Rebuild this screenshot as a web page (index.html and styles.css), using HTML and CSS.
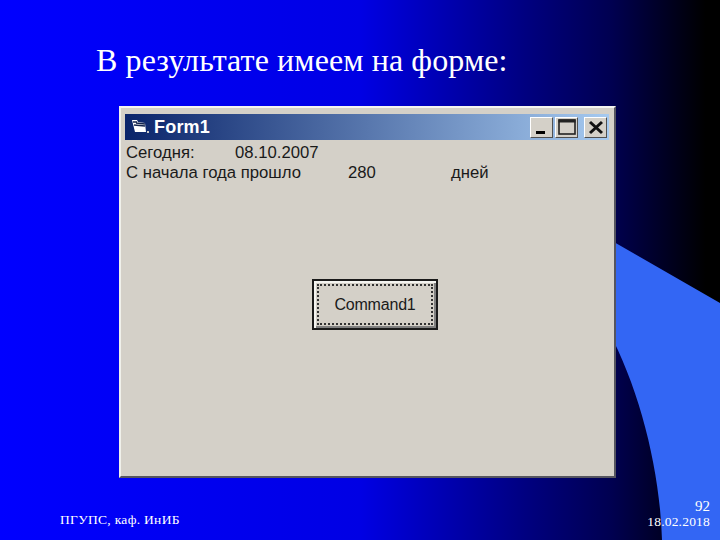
FILE: index.html
```html
<!DOCTYPE html>
<html lang="ru">
<head>
<meta charset="utf-8">
<title>Слайд 92</title>
<link rel="stylesheet" href="styles.css">
</head>
<body>
<div class="slide">
  <svg class="deco" width="720" height="540" viewBox="0 0 720 540" aria-hidden="true">
    <path d="M600 234 L720 303 V540 H662 C660 470 640 390 608 330 Z" fill="#3366f4"/>
  </svg>
  <h1 class="title">В результате имеем на форме:</h1>
  <div class="window">
    <div class="titlebar">
      <svg class="app-icon" width="18" height="16" viewBox="0 0 18 16" aria-hidden="true">
        <path d="M1 1 L6 1 L7 3 L14 4 L15 13 L4 13 Z" fill="#fff"/>
        <path d="M3 6 L14 7 M2 3 L6 3 M5 4 L14 5" stroke="#14244e" stroke-width="1.4" fill="none"/>
        <rect x="16" y="12" width="2" height="2" fill="#c8c8c8"/>
      </svg>
      <span class="caption">Form1</span>
      <div class="controls">
        <span class="ctl"><svg width="23" height="21" viewBox="0 0 23 21"><rect x="6" y="14" width="9" height="3" fill="#000"/></svg></span>
        <span class="ctl"><svg width="23" height="21" viewBox="0 0 23 21"><rect x="4" y="3" width="16" height="14" fill="none" stroke="#222" stroke-width="1.6"/><rect x="3.5" y="2.5" width="17" height="3" fill="#222"/></svg></span>
        <span class="ctl ctl-close"><svg width="23" height="21" viewBox="0 0 23 21"><path d="M6 5 L18 16 M18 5 L6 16" stroke="#111" stroke-width="3"/></svg></span>
      </div>
    </div>
    <div class="form-body">
      <div class="row row-one">
        <span class="cell-a">Сегодня:</span>
        <span>08.10.2007</span>
      </div>
      <div class="row row-two">
        <span class="cell-b">С начала года прошло</span>
        <span class="cell-c">280</span>
        <span>дней</span>
      </div>
      <div class="button-wrap">
        <button class="command" type="button"><span class="focus">Command1</span></button>
      </div>
    </div>
  </div>
  <div class="footer">
    <span class="org">ПГУПС, каф. ИнИБ</span>
    <div class="meta">
      <span class="page">92</span>
      <span class="date">18.02.2018</span>
    </div>
  </div>
</div>
</body>
</html>
```
FILE: styles.css
```css
* { box-sizing: border-box; }
html, body { margin: 0; padding: 0; }
body { width: 720px; height: 540px; overflow: hidden; }

.slide {
  position: relative;
  width: 720px;
  height: 540px;
  padding: 0 10px 0 60px;
  display: flex;
  flex-direction: column;
  background: linear-gradient(90deg, #0000ff 0, #0000e4 50%, #000080 73%, #000050 85%, #000 98%);
  overflow: hidden;
}
.deco { position: absolute; left: 0; top: 0; }

.title {
  position: relative;
  margin: 0;
  height: 106px;
  padding: 41px 0 0 36px;
  font: 400 32px/38px "Liberation Serif", serif;
  letter-spacing: 0.1px;
  color: #fff;
  white-space: nowrap;
}

.window {
  position: relative;
  width: 497px;
  height: 372px;
  margin-left: 59px;
  padding: 8px 7px 0 6px;
  background: #d4d0c8;
  border-top: 2px solid #f4f4f0;
  border-left: 2px solid #f0f0ea;
  border-right: 2px solid #55555f;
  border-bottom: 2px solid #55555f;
  display: flex;
  flex-direction: column;
}

.titlebar {
  height: 26px;
  flex: none;
  margin: -2px -2px 0 -2px;
  display: flex;
  align-items: center;
  padding: 0 2px 0 6px;
  background: linear-gradient(90deg, #0a246a, #a6caf0);
}
.app-icon { margin-right: 5px; }
.caption {
  font: 700 18px/20px "Liberation Sans", sans-serif;
  color: #fff;
  letter-spacing: 0.2px;
}
.controls { margin-left: auto; display: flex; gap: 2px; }
.ctl {
  width: 23px;
  height: 21px;
  background: #d4d0c8;
  border-top: 1px solid #fff;
  border-left: 1px solid #fff;
  border-right: 1px solid #505050;
  border-bottom: 1px solid #505050;
  display: block;
  overflow: hidden;
}
.ctl svg { display: block; margin: -1px; }
.ctl-close { margin-left: 4px; }

.form-body {
  flex: 1;
  display: flex;
  flex-direction: column;
  padding: 3px 0 0 0;
  margin-left: -1px;
  font: 400 16.7px/20px "Liberation Sans", sans-serif;
  color: #1a1a1a;
}
.row { display: flex; white-space: nowrap; }
.cell-a { width: 109px; }
.cell-b { width: 222px; }
.cell-c { width: 103px; }

.button-wrap { padding: 96px 0 0 186px; }
.command {
  width: 126px;
  height: 51px;
  padding: 3px;
  display: block;
  background: #d4d0c8;
  border: 2px solid #1a1a1a;
  box-shadow: inset 2px 2px 0 #f4f4f0, inset -2px -2px 0 #808080;
  font: 400 16px/20px "Liberation Sans", sans-serif;
  letter-spacing: -0.2px;
  color: #1a1a1a;
}
.focus {
  display: flex;
  align-items: center;
  justify-content: center;
  width: 100%;
  height: 100%;
  border: 2px dotted #333;
}

.footer {
  position: relative;
  flex: 1;
  display: flex;
  justify-content: space-between;
  color: #fff;
  font-family: "Liberation Serif", serif;
}
.org { padding-top: 34px; font-size: 13.5px; line-height: 16px; letter-spacing: 0.3px; }
.meta { display: flex; flex-direction: column; align-items: flex-end; padding-top: 21px; font-size: 13.5px; line-height: 15px; }
.page { font-size: 15px; }
.date { letter-spacing: 0.2px; }
```
